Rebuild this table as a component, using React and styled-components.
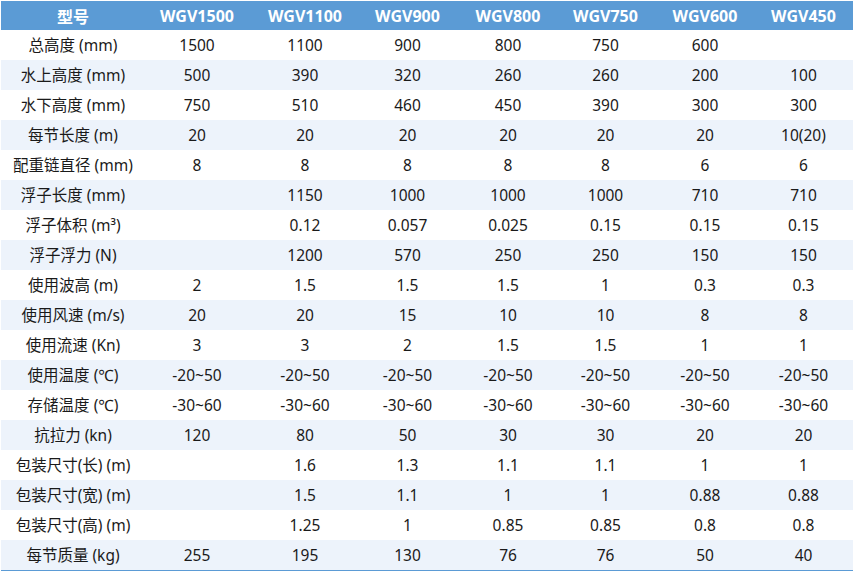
import React from "react";
import styled, { createGlobalStyle } from "styled-components";

const Global = createGlobalStyle`
  html, body { margin: 0; padding: 0; background: #ffffff; }
  body { font-family: "Noto Sans", "Noto Sans CJK SC", sans-serif; }
`;

const Wrap = styled.div`
  padding: 1px 0 0 1px;
  width: 852px;
`;

const Table = styled.table`
  width: 852px;
  border-collapse: collapse;
  table-layout: fixed;
  font-family: "Noto Sans", "Noto Sans CJK SC", sans-serif;
  font-size: 15.5px;
  color: #1a1a1a;
  border-bottom: 2px solid #5b9bd5;
`;

const Col = styled.col`
  width: ${(p) => p.$w}px;
`;

const HeadRow = styled.tr`
  height: 29px;
  background: #5b9bd5;
`;

const HeadCell = styled.th`
  padding: 0 ${(p) => p.$pr || 0}px 0 0;
  text-align: center;
  color: #ffffff;
  font-weight: 700;
  font-size: 16px;
  white-space: nowrap;
`;

const Row = styled.tr`
  height: 30px;
  background: ${(p) => (p.$alt ? "#edf3fb" : "#ffffff")};
`;

const Cell = styled.td`
  padding: 1px ${(p) => p.$pr || 0}px 0 0;
  height: 29px;
  text-align: center;
  white-space: nowrap;
  line-height: 29px;
`;

const widths = [144, 104, 112, 93, 108, 87, 112, 92];

const headers = ["型号", "WGV1500", "WGV1100", "WGV900", "WGV800", "WGV750", "WGV600", "WGV450"];

const rows = [
  ["总高度 (mm)", "1500", "1100", "900", "800", "750", "600", ""],
  ["水上高度 (mm)", "500", "390", "320", "260", "260", "200", "100"],
  ["水下高度 (mm)", "750", "510", "460", "450", "390", "300", "300"],
  ["每节长度 (m)", "20", "20", "20", "20", "20", "20", "10(20)"],
  ["配重链直径 (mm)", "8", "8", "8", "8", "8", "6", "6"],
  ["浮子长度 (mm)", "", "1150", "1000", "1000", "1000", "710", "710"],
  ["浮子体积 (m³)", "", "0.12", "0.057", "0.025", "0.15", "0.15", "0.15"],
  ["浮子浮力 (N)", "", "1200", "570", "250", "250", "150", "150"],
  ["使用波高 (m)", "2", "1.5", "1.5", "1.5", "1", "0.3", "0.3"],
  ["使用风速 (m/s)", "20", "20", "15", "10", "10", "8", "8"],
  ["使用流速 (Kn)", "3", "3", "2", "1.5", "1.5", "1", "1"],
  ["使用温度 (℃)", "-20~50", "-20~50", "-20~50", "-20~50", "-20~50", "-20~50", "-20~50"],
  ["存储温度 (℃)", "-30~60", "-30~60", "-30~60", "-30~60", "-30~60", "-30~60", "-30~60"],
  ["抗拉力 (kn)", "120", "80", "50", "30", "30", "20", "20"],
  ["包装尺寸(长) (m)", "", "1.6", "1.3", "1.1", "1.1", "1", "1"],
  ["包装尺寸(宽) (m)", "", "1.5", "1.1", "1", "1", "0.88", "0.88"],
  ["包装尺寸(高) (m)", "", "1.25", "1", "0.85", "0.85", "0.8", "0.8"],
  ["每节质量 (kg)", "255", "195", "130", "76", "76", "50", "40"],
];

const lastPad = 7;

export default function App() {
  return (
    <>
      <Global />
      <Wrap>
        <Table>
          <colgroup>
            {widths.map((w, i) => (
              <Col key={i} $w={w} />
            ))}
          </colgroup>
          <thead>
            <HeadRow>
              {headers.map((h, i) => (
                <HeadCell key={i} $pr={i === headers.length - 1 ? lastPad : 0}>
                  {h}
                </HeadCell>
              ))}
            </HeadRow>
          </thead>
          <tbody>
            {rows.map((r, ri) => (
              <Row key={ri} $alt={ri % 2 === 1}>
                {r.map((c, ci) => (
                  <Cell key={ci} $pr={ci === r.length - 1 ? lastPad : 0}>
                    {c}
                  </Cell>
                ))}
              </Row>
            ))}
          </tbody>
        </Table>
      </Wrap>
    </>
  );
}
